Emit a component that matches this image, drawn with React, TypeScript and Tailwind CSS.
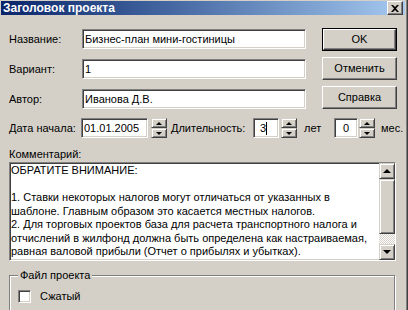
import React from 'react';

const sunken = "border border-t-[#808080] border-l-[#808080] border-b-white border-r-white shadow-[inset_1px_1px_0_#404040,inset_-1px_-1px_0_#d4d0c8]";
const raised = "border border-t-white border-l-white border-b-[#404040] border-r-[#404040] shadow-[inset_-1px_-1px_0_#808080]";
const spinHalf = "flex-1 flex items-center justify-center bg-[#d4d0c8] border border-t-[#d4d0c8] border-l-[#d4d0c8] border-b-[#404040] border-r-[#404040] shadow-[inset_1px_1px_0_#fff,inset_-1px_-1px_0_#808080]";

const Spin = () => (
    <div className="w-[16px] h-[20px] flex flex-col">
        <div className={spinHalf}>
            <div className="w-0 h-0 border-x-[3px] border-x-transparent border-b-[3px] border-b-black" />
        </div>
        <div className={spinHalf}>
            <div className="w-0 h-0 border-x-[3px] border-x-transparent border-t-[3px] border-t-black" />
        </div>
    </div>
);

const Field = ({ value, w }: { value: string; w: string }) => (
    <div className={`${sunken} ${w} h-[20px] bg-white flex items-center pl-[2px] leading-[13px] whitespace-nowrap overflow-hidden`}>
        {value}
    </div>
);

const Btn = ({ label, def }: { label: string; def?: boolean }) => (
    def ? (
        <div className="w-[75px] h-[23px] border border-black flex">
            <div className={`${raised} flex-1 flex items-center justify-center`}>{label}</div>
        </div>
    ) : (
        <div className={`${raised} w-[75px] h-[23px] flex items-center justify-center`}>{label}</div>
    )
);

const lines = [
    'ОБРАТИТЕ ВНИМАНИЕ:',
    '\u00a0',
    '1. Ставки некоторых налогов могут отличаться от указанных в',
    'шаблоне. Главным образом это касается местных налогов.',
    '2. Для торговых проектов база для расчета транспортного налога и',
    'отчислений в жилфонд должна быть определена как настраиваемая,',
    'равная валовой прибыли (Отчет о прибылях и убытках).',
];

export default function App() {
    return (
        <div className="w-[408px] h-[310px] overflow-hidden bg-[#d4d0c8] flex font-['Liberation_Sans',Arial,sans-serif] text-[11px] text-black">
            <div className="w-[406px] flex flex-col">
                {/* Title bar */}
                <div className="mt-px mx-px h-[18px] bg-linear-to-r from-[#0a246a] to-[#a6caf0] flex items-center justify-between pl-[2px] pr-[2px]">
                    <span className="text-white font-bold text-[12px] leading-[14px]">Заголовок проекта</span>
                    <div className={`${raised} bg-[#d4d0c8] w-[16px] h-[14px] flex items-center justify-center`}>
                        <svg width="8" height="7" viewBox="0 0 8 7">
                            <path d="M0 0h2l2 2 2-2h2L5 3.5 8 7H6L4 5 2 7H0l3-3.5z" fill="black" />
                        </svg>
                    </div>
                </div>

                <div className="pl-[9px] flex flex-col">
                    {/* Name / variant / author + buttons */}
                    <div className="mt-[13px] flex">
                        <div className="pt-px flex flex-col gap-[10px]">
                            <div className="flex items-center h-[20px]">
                                <span className="w-[73px]">Название:</span>
                                <Field value="Бизнес-план мини-гостиницы" w="w-[224px]" />
                            </div>
                            <div className="flex items-center h-[20px]">
                                <span className="w-[73px]">Вариант:</span>
                                <Field value="1" w="w-[224px]" />
                            </div>
                            <div className="flex items-center h-[20px]">
                                <span className="w-[73px]">Автор:</span>
                                <Field value="Иванова Д.В." w="w-[224px]" />
                            </div>
                        </div>
                        <div className="ml-[16px] flex flex-col gap-[6px]">
                            <Btn label="OK" def />
                            <Btn label="Отменить" />
                            <Btn label="Справка" />
                        </div>
                    </div>

                    {/* Dates */}
                    <div className="mt-[9px] flex items-center h-[20px]">
                        <span className="w-[72px]">Дата начала:</span>
                        <Field value="01.01.2005" w="w-[67px]" />
                        <div className="ml-[3px]"><Spin /></div>
                        <span className="ml-[4px] w-[82px]">Длительность:</span>
                        <div className={`${sunken} w-[26px] h-[20px] bg-white flex items-center pl-[6px]`}>
                            <span>3</span>
                            <span className="w-px h-[13px] bg-black" />
                        </div>
                        <div className="ml-[2px]"><Spin /></div>
                        <span className="ml-[7px] w-[30px]">лет</span>
                        <div className={`${sunken} w-[24px] h-[20px] bg-white flex items-center justify-center`}>0</div>
                        <div className="ml-px"><Spin /></div>
                        <span className="ml-[6px]">мес.</span>
                    </div>

                    <div className="mt-[10px] leading-[13px]">Комментарий:</div>

                    {/* Comment box */}
                    <div className={`${sunken} mt-px w-[387px] h-[99px] bg-white flex overflow-hidden`}>
                        <div className="flex-1 pl-px pt-px leading-[13.5px] overflow-hidden">
                            {lines.map((l, i) => (
                                <div key={i} className="whitespace-nowrap">{l}</div>
                            ))}
                        </div>
                        <div className="w-[16px] flex flex-col">
                            <div className={`${spinHalf} flex-none h-[16px]`}>
                                <div className="w-0 h-0 border-x-[4px] border-x-transparent border-b-[4px] border-b-black" />
                            </div>
                            <div className={`${spinHalf} flex-none h-[55px]`} />
                            <div className="flex-1 bg-[repeating-conic-gradient(#d4d0c8_0_25%,#ffffff_0_50%)] bg-size-[2px_2px]" />
                            <div className={`${spinHalf} flex-none h-[16px]`}>
                                <div className="w-0 h-0 border-x-[4px] border-x-transparent border-t-[4px] border-t-black" />
                            </div>
                        </div>
                    </div>

                    {/* Group box */}
                    <div className="relative mt-[14px] w-[386px] h-[40px] border border-[#808080] shadow-[inset_1px_1px_0_#fff,1px_1px_0_#fff] pl-[8px] pt-[14px]">
                        <span className="absolute -top-[7px] left-[8px] px-[2px] bg-[#d4d0c8] leading-[13px]">Файл проекта</span>
                        <div className="flex items-center">
                            <div className={`${sunken} w-[13px] h-[13px] bg-white`} />
                            <span className="ml-[9px] leading-[13px]">Сжатый</span>
                        </div>
                    </div>
                </div>
            </div>
            <div className="w-px bg-[#808080]" />
            <div className="w-px bg-[#404040]" />
        </div>
    );
}
